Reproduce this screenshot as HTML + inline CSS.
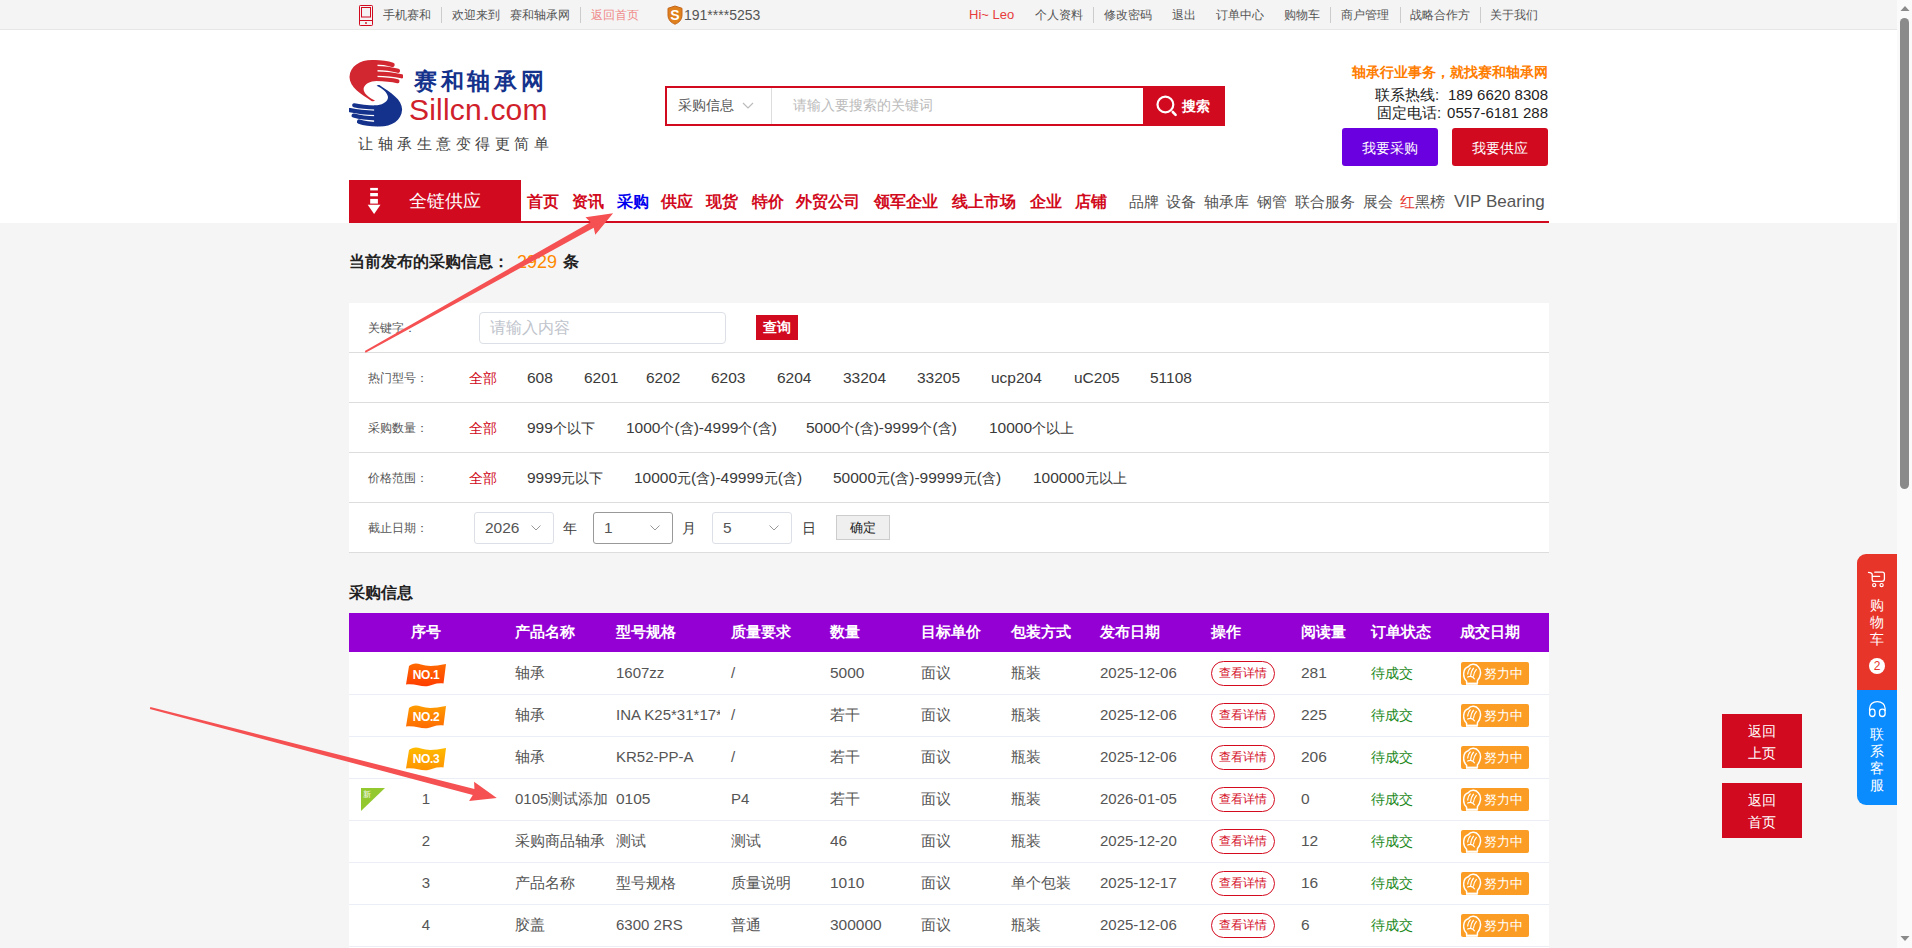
<!DOCTYPE html>
<html><head><meta charset="utf-8">
<style>
*{margin:0;padding:0;box-sizing:border-box}
html,body{width:1912px;height:948px;overflow:hidden;background:#f5f5f5;font-family:"Liberation Sans",sans-serif;color:#333}
.a{position:absolute;white-space:nowrap}
#top{position:absolute;left:0;top:0;width:1897px;height:30px;background:#f4f4f4;border-bottom:1px solid #e6e6e6}
#top .a{font-size:12px;color:#555;top:7px;line-height:16px}
#top .sep{width:1px;height:16px;background:#ccc;top:7px}
#hdr{position:absolute;left:0;top:30px;width:1897px;height:193px;background:#fff}
.nav{font-size:16px;font-weight:bold;color:#d10a20;top:192px;line-height:20px}
.nav2{font-size:15px;color:#555;top:192px;line-height:20px}
</style></head><body>
<div id="top">
  <svg class="a" style="left:358px;top:4px" width="16" height="23" viewBox="0 0 16 23"><rect x="1.5" y="1.5" width="13" height="20" rx="0.8" fill="none" stroke="#d10a20" stroke-width="1"/><rect x="3.5" y="3.5" width="9" height="9.5" fill="none" stroke="#d10a20" stroke-width="1"/><line x1="1.5" y1="16.5" x2="14.5" y2="16.5" stroke="#d10a20" stroke-width="1"/><circle cx="8" cy="19" r="0.9" fill="#d10a20"/></svg>
  <span class="a" style="left:383px">手机赛和</span>
  <span class="a sep" style="left:441px"></span>
  <span class="a" style="left:452px">欢迎来到</span>
  <span class="a" style="left:510px">赛和轴承网</span>
  <span class="a sep" style="left:580px"></span>
  <span class="a" style="left:591px;color:#f08a8a">返回首页</span>
  <svg class="a" style="left:667px;top:5px" width="16" height="20" viewBox="0 0 16 20"><path d="M8 1 L15 3.3 L15 10 C15 14.8 11.8 17.8 8 19.2 C4.2 17.8 1 14.8 1 10 L1 3.3 Z" fill="#e0801c" stroke="#c4661a" stroke-width="1"/><text x="8" y="15.2" font-size="14" font-weight="bold" fill="#fff" text-anchor="middle" font-family="Liberation Sans">S</text></svg>
  <span class="a" style="left:684px;font-size:14px">191****5253</span>
  <span class="a" style="left:969px;color:#e83c3c;font-size:13px">Hi~ Leo</span>
  <span class="a" style="left:1035px">个人资料</span>
  <span class="a sep" style="left:1093px"></span>
  <span class="a" style="left:1104px">修改密码</span>
  <span class="a" style="left:1172px">退出</span>
  <span class="a" style="left:1216px">订单中心</span>
  <span class="a" style="left:1284px">购物车</span>
  <span class="a sep" style="left:1330px"></span>
  <span class="a" style="left:1341px">商户管理</span>
  <span class="a sep" style="left:1400px"></span>
  <span class="a" style="left:1410px">战略合作方</span>
  <span class="a sep" style="left:1480px"></span>
  <span class="a" style="left:1490px">关于我们</span>
</div>
<div id="hdr"></div>
<svg class="a" style="left:349px;top:60px" width="54" height="67" viewBox="0 0 54 67"><path d="M22.5,41 C12,34 0.5,27 0.5,17 C1,6 11,0 23,0 C25,0 27,0.3 28.5,0.6 L28.5,21 C26.5,20.9 25,21.1 23,21.6 C17,23.3 13.8,26.8 14.8,30.5 C16,34.5 20.5,38 26,40.6 C25,41.6 23.5,41.5 22.5,41 Z" fill="#d22630"/><g stroke="#d22630" stroke-linecap="round" fill="none"><path d="M25,2.2 Q36,2.2 43.5,4.8" stroke-width="4.4"/><path d="M27,8 Q40,8.3 49,10.8" stroke-width="4.2"/><path d="M27,13.6 Q42,13.9 52.6,16.3" stroke-width="4.2"/><path d="M27,19 Q40,19.2 48.5,21.2" stroke-width="4"/></g><g transform="rotate(180 26.8 33.2)"><path d="M22.5,41 C12,34 0.5,27 0.5,17 C1,6 11,0 23,0 C25,0 27,0.3 28.5,0.6 L28.5,21 C26.5,20.9 25,21.1 23,21.6 C17,23.3 13.8,26.8 14.8,30.5 C16,34.5 20.5,38 26,40.6 C25,41.6 23.5,41.5 22.5,41 Z" fill="#14328c"/><g stroke="#14328c" stroke-linecap="round" fill="none"><path d="M25,2.2 Q36,2.2 43.5,4.8" stroke-width="4.4"/><path d="M27,8 Q40,8.3 49,10.8" stroke-width="4.2"/><path d="M27,13.6 Q42,13.9 52.6,16.3" stroke-width="4.2"/><path d="M27,19 Q40,19.2 48.5,21.2" stroke-width="4"/></g></g></svg>
<span class="a" style="left:414px;top:66px;font-size:23px;font-weight:900;color:#14328c;letter-spacing:3.7px;line-height:30px">赛和轴承网</span>
<span class="a" style="left:409px;top:93px;font-size:30px;color:#d0202a;letter-spacing:0.2px;line-height:34px">Sillcn.com</span>
<span class="a" style="left:358px;top:134px;font-size:15px;color:#444;letter-spacing:4.5px;line-height:20px">让轴承生意变得更简单</span>

<div class="a" style="left:665px;top:86px;width:479px;height:40px;border:2px solid #d10a20;border-right:none;background:#fff"></div>
<span class="a" style="left:678px;top:96px;font-size:14px;color:#555;line-height:18px">采购信息</span>
<svg class="a" style="left:742px;top:102px" width="12" height="8" viewBox="0 0 12 8"><path d="M1 1 L6 6 L11 1" stroke="#bbb" stroke-width="1.2" fill="none"/></svg>
<div class="a" style="left:771px;top:88px;width:1px;height:36px;background:#ddd"></div>
<span class="a" style="left:793px;top:96px;font-size:14px;color:#bbb;line-height:18px">请输入要搜索的关键词</span>
<div class="a" style="left:1143px;top:86px;width:82px;height:40px;background:#d10a20"></div>
<svg class="a" style="left:1155px;top:95px" width="23" height="23" viewBox="0 0 23 23"><circle cx="10.4" cy="9.5" r="7.9" stroke="#fff" stroke-width="2.2" fill="none"/><path d="M17.8 17 L20.6 19.8" stroke="#fff" stroke-width="2.6" stroke-linecap="round"/></svg>
<span class="a" style="left:1182px;top:97px;font-size:14px;font-weight:bold;color:#fff;line-height:18px">搜索</span>

<span class="a" style="left:1352px;top:63px;font-size:14px;font-weight:bold;color:#ff7d00;line-height:18px">轴承行业事务，就找赛和轴承网</span>
<span class="a" style="left:1375px;top:86px;font-size:15px;color:#222;line-height:18px">联系热线</span><span class="a" style="left:1435px;top:86px;font-size:15px;color:#222;line-height:18px">:</span><span class="a" style="left:1348px;width:200px;text-align:right;top:86px;font-size:15px;color:#222;line-height:18px">189 6620 8308</span>
<span class="a" style="left:1377px;top:104px;font-size:15px;color:#222;line-height:18px">固定电话</span><span class="a" style="left:1437px;top:104px;font-size:15px;color:#222;line-height:18px">:</span><span class="a" style="left:1348px;width:200px;text-align:right;top:104px;font-size:15px;color:#222;line-height:18px">0557-6181 288</span>
<div class="a" style="left:1342px;top:128px;width:96px;height:38px;background:#6a00df;border-radius:3px;color:#fff;font-size:14px;font-weight:500;text-align:center;line-height:40px">我要采购</div>
<div class="a" style="left:1452px;top:128px;width:96px;height:38px;background:#d10a20;border-radius:3px;color:#fff;font-size:14px;font-weight:500;text-align:center;line-height:40px">我要供应</div>

<div class="a" style="left:349px;top:180px;width:172px;height:43px;background:#d10a20"></div>
<svg class="a" style="left:367px;top:187px" width="14" height="28" viewBox="0 0 14 28"><rect x="3.2" y="0.9" width="7.7" height="2.5" fill="#fff"/><rect x="3.2" y="6" width="7.7" height="3.3" fill="#fff"/><rect x="3.2" y="11.9" width="7.7" height="4.7" fill="#fff"/><path d="M0.7 17.7 L13.5 17.7 L7.1 26.9 Z" fill="#fff"/></svg>
<span class="a" style="left:409px;top:190px;font-size:18px;font-weight:500;color:#fff;line-height:22px">全链供应</span>
<div class="a" style="left:520px;top:221px;width:1029px;height:2px;background:#d10a20"></div>
<span class="a nav" style="left:527px">首页</span>
<span class="a nav" style="left:572px">资讯</span>
<span class="a nav" style="left:617px;color:#0000ee">采购</span>
<span class="a nav" style="left:661px">供应</span>
<span class="a nav" style="left:706px">现货</span>
<span class="a nav" style="left:752px">特价</span>
<span class="a nav" style="left:796px">外贸公司</span>
<span class="a nav" style="left:874px">领军企业</span>
<span class="a nav" style="left:952px">线上市场</span>
<span class="a nav" style="left:1030px">企业</span>
<span class="a nav" style="left:1075px">店铺</span>
<span class="a nav2" style="left:1129px">品牌</span>
<span class="a nav2" style="left:1166px">设备</span>
<span class="a nav2" style="left:1204px">轴承库</span>
<span class="a nav2" style="left:1257px">钢管</span>
<span class="a nav2" style="left:1295px">联合服务</span>
<span class="a nav2" style="left:1363px">展会</span>
<span class="a nav2" style="left:1400px"><span style="color:#e8342c">红</span>黑榜</span>
<span class="a nav2" style="left:1454px;font-size:17px">VIP</span>
<span class="a nav2" style="left:1486px;font-size:17px">Bearing</span>
<span class="a" style="left:349px;top:252px;font-size:16px;font-weight:bold;color:#222;line-height:20px">当前发布的采购信息：</span>
<span class="a" style="left:517px;top:251px;font-size:18px;color:#ff8a00;line-height:22px">2929</span>
<span class="a" style="left:563px;top:252px;font-size:16px;font-weight:bold;color:#222;line-height:20px">条</span>
<div class="a" style="left:349px;top:303px;width:1200px;height:250px;background:#fff"></div>
<div class="a" style="left:349px;top:352px;width:1200px;height:1px;background:#ddd"></div>
<div class="a" style="left:349px;top:402px;width:1200px;height:1px;background:#ddd"></div>
<div class="a" style="left:349px;top:452px;width:1200px;height:1px;background:#ddd"></div>
<div class="a" style="left:349px;top:502px;width:1200px;height:1px;background:#ddd"></div>
<div class="a" style="left:349px;top:552px;width:1200px;height:1px;background:#ddd"></div>
<style>.lb{font-size:12px;color:#555;line-height:16px}.it{font-size:14px;color:#3a3a3a;line-height:18px}.rd{color:#d10a20}</style>
<span class="a lb" style="left:368px;top:320px">关键字：</span>
<div class="a" style="left:479px;top:312px;width:247px;height:32px;border:1px solid #dcdfe6;border-radius:4px;background:#fff"></div>
<span class="a" style="left:490px;top:318px;font-size:16px;color:#c0c4cc;line-height:20px">请输入内容</span>
<div class="a" style="left:756px;top:315px;width:42px;height:25px;background:#d10a20;color:#fff;font-size:14px;font-weight:bold;text-align:center;line-height:25px">查询</div>

<span class="a lb" style="left:368px;top:370px">热门型号：</span>
<span class="a it rd" style="left:469px;top:369px">全部</span>
<span class="a it" style="left:527px;top:369px"><span style="font-size:15.5px">608</span></span>
<span class="a it" style="left:584px;top:369px"><span style="font-size:15.5px">6201</span></span>
<span class="a it" style="left:646px;top:369px"><span style="font-size:15.5px">6202</span></span>
<span class="a it" style="left:711px;top:369px"><span style="font-size:15.5px">6203</span></span>
<span class="a it" style="left:777px;top:369px"><span style="font-size:15.5px">6204</span></span>
<span class="a it" style="left:843px;top:369px"><span style="font-size:15.5px">33204</span></span>
<span class="a it" style="left:917px;top:369px"><span style="font-size:15.5px">33205</span></span>
<span class="a it" style="left:991px;top:369px"><span style="font-size:15.5px">ucp204</span></span>
<span class="a it" style="left:1074px;top:369px"><span style="font-size:15.5px">uC205</span></span>
<span class="a it" style="left:1150px;top:369px"><span style="font-size:15.5px">51108</span></span>

<span class="a lb" style="left:368px;top:420px">采购数量：</span>
<span class="a it rd" style="left:469px;top:419px">全部</span>
<span class="a it" style="left:527px;top:419px"><span style="font-size:15.5px">999</span>个以下</span>
<span class="a it" style="left:626px;top:419px"><span style="font-size:15.5px">1000</span>个<span style="font-size:15.5px">(</span>含<span style="font-size:15.5px">)-4999</span>个<span style="font-size:15.5px">(</span>含<span style="font-size:15.5px">)</span></span>
<span class="a it" style="left:806px;top:419px"><span style="font-size:15.5px">5000</span>个<span style="font-size:15.5px">(</span>含<span style="font-size:15.5px">)-9999</span>个<span style="font-size:15.5px">(</span>含<span style="font-size:15.5px">)</span></span>
<span class="a it" style="left:989px;top:419px"><span style="font-size:15.5px">10000</span>个以上</span>

<span class="a lb" style="left:368px;top:470px">价格范围：</span>
<span class="a it rd" style="left:469px;top:469px">全部</span>
<span class="a it" style="left:527px;top:469px"><span style="font-size:15.5px">9999</span>元以下</span>
<span class="a it" style="left:634px;top:469px"><span style="font-size:15.5px">10000</span>元<span style="font-size:15.5px">(</span>含<span style="font-size:15.5px">)-49999</span>元<span style="font-size:15.5px">(</span>含<span style="font-size:15.5px">)</span></span>
<span class="a it" style="left:833px;top:469px"><span style="font-size:15.5px">50000</span>元<span style="font-size:15.5px">(</span>含<span style="font-size:15.5px">)-99999</span>元<span style="font-size:15.5px">(</span>含<span style="font-size:15.5px">)</span></span>
<span class="a it" style="left:1033px;top:469px"><span style="font-size:15.5px">100000</span>元以上</span>

<span class="a lb" style="left:368px;top:520px">截止日期：</span>
<div class="a" style="left:474px;top:512px;width:80px;height:32px;border:1px solid #dcdfe6;border-radius:3px;background:#fff"></div>
<span class="a it" style="left:485px;top:519px;color:#555"><span style="font-size:15.5px">2026</span></span>
<svg class="a" style="left:531px;top:525px" width="10" height="6" viewBox="0 0 10 6"><path d="M0.5 0.5 L5 5 L9.5 0.5" stroke="#999" stroke-width="1" fill="none"/></svg>
<span class="a it" style="left:563px;top:519px">年</span>
<div class="a" style="left:593px;top:512px;width:80px;height:32px;border:1px solid #999;border-radius:3px;background:#fff"></div>
<span class="a it" style="left:604px;top:519px;color:#555"><span style="font-size:15.5px">1</span></span>
<svg class="a" style="left:650px;top:525px" width="10" height="6" viewBox="0 0 10 6"><path d="M0.5 0.5 L5 5 L9.5 0.5" stroke="#999" stroke-width="1" fill="none"/></svg>
<span class="a it" style="left:682px;top:519px">月</span>
<div class="a" style="left:712px;top:512px;width:80px;height:32px;border:1px solid #dcdfe6;border-radius:3px;background:#fff"></div>
<span class="a it" style="left:723px;top:519px;color:#555"><span style="font-size:15.5px">5</span></span>
<svg class="a" style="left:769px;top:525px" width="10" height="6" viewBox="0 0 10 6"><path d="M0.5 0.5 L5 5 L9.5 0.5" stroke="#999" stroke-width="1" fill="none"/></svg>
<span class="a it" style="left:802px;top:519px">日</span>
<div class="a" style="left:836px;top:515px;width:54px;height:25px;border:1px solid #ccc;background:#efefef;color:#222;font-size:13px;text-align:center;line-height:23px">确定</div>

<span class="a" style="left:349px;top:583px;font-size:16px;font-weight:bold;color:#222;line-height:20px">采购信息</span>
<!--TABLE-->
<style>.th{font-size:15px;font-weight:bold;color:#fff;top:622px;line-height:20px}.td{font-size:14.5px;color:#555;line-height:20px}.td i{font-style:normal;font-size:15px}.td i.d{font-size:15.5px}</style>
<div class="a" style="left:349px;top:613px;width:1200px;height:39px;background:#9400d3"></div>
<div class="a" style="left:349px;top:652px;width:1200px;height:296px;background:#fff"></div>
<span class="a th" style="left:411px">序号</span>
<span class="a th" style="left:515px">产品名称</span>
<span class="a th" style="left:616px">型号规格</span>
<span class="a th" style="left:731px">质量要求</span>
<span class="a th" style="left:830px">数量</span>
<span class="a th" style="left:921px">目标单价</span>
<span class="a th" style="left:1011px">包装方式</span>
<span class="a th" style="left:1100px">发布日期</span>
<span class="a th" style="left:1211px">操作</span>
<span class="a th" style="left:1301px">阅读量</span>
<span class="a th" style="left:1371px">订单状态</span>
<span class="a th" style="left:1460px">成交日期</span>
<div class="a" style="left:349px;top:694px;width:1200px;height:1px;background:#eceef5"></div>
<svg class="a" style="left:406px;top:663px" width="41" height="24" viewBox="0 0 41 24"><defs><linearGradient id="g1" x1="0" y1="0" x2="0" y2="1"><stop offset="0" stop-color="#ff6a00"/><stop offset="1" stop-color="#ff3d00"/></linearGradient></defs><path d="M3,3 C6,0.5 10,-0.3 15,1.5 C21,3.5 28,3.5 40,1 L37.5,20.5 C30,19.5 26,22.5 21,23.2 C15,24 8,20 0,21.5 Z" fill="url(#g1)"/><text x="20" y="15.5" font-size="12" font-weight="bold" fill="#fff" text-anchor="middle" letter-spacing="-0.35" font-family="Liberation Sans">NO.1</text></svg>
<span class="a td" style="left:515px;top:663px;">轴承</span>
<span class="a td" style="left:616px;top:663px;width:104px;overflow:hidden;"><i>1607zz</i></span>
<span class="a td" style="left:731px;top:663px;"><i>/</i></span>
<span class="a td" style="left:830px;top:663px;"><i class="d">5000</i></span>
<span class="a td" style="left:921px;top:663px;">面议</span>
<span class="a td" style="left:1011px;top:663px;">瓶装</span>
<span class="a td" style="left:1100px;top:663px;"><i>2025-12-06</i></span>
<div class="a" style="left:1211px;top:661px;width:64px;height:25px;border:1px solid #d40b1f;border-radius:13px;color:#d40b1f;font-size:12px;text-align:center;line-height:23px">查看详情</div>
<span class="a td" style="left:1301px;top:663px"><i class="d">281</i></span>
<span class="a td" style="left:1371px;top:663px;color:#1e8a1e;font-size:14px">待成交</span>
<div class="a" style="left:1461px;top:662px;width:68px;height:23px;background:#fb9d24;border-radius:2px"></div>
<svg class="a" style="left:1463px;top:663px" width="19" height="23" viewBox="0 0 19 23"><path d="M3.6,20.5 L3.6,18.3 C1.3,16 0.4,13.5 0.7,10.5 C1,6.8 2.8,4.5 5.2,3.8 C6.7,1.8 8.6,1.1 10.6,1.3 C12.8,1.5 14.3,2.3 15.3,3.8 C17.2,5.8 17.8,8.5 17.4,11.2 C17,14 15.8,16.3 14.4,17.8 L14.4,20.5" stroke="#fff" stroke-width="1.5" fill="none"/><rect x="3" y="19.6" width="11.8" height="2.2" fill="#fff"/><path d="M4.6,11.5 C5,8.5 6,6 7.6,4.6 M7.6,13 C8,9.5 9.2,6.5 10.8,4.8 M10.4,13.5 C10.8,10.5 12,8 13.6,6.2 M4.2,14.2 C7,12.8 10,13.2 11.8,16.2" stroke="#fff" stroke-width="1.2" fill="none"/></svg>
<span class="a" style="left:1484px;top:665px;font-size:13px;font-weight:500;color:#fff;line-height:18px">努力中</span>
<div class="a" style="left:349px;top:736px;width:1200px;height:1px;background:#eceef5"></div>
<svg class="a" style="left:406px;top:705px" width="41" height="24" viewBox="0 0 41 24"><defs><linearGradient id="g2" x1="0" y1="0" x2="0" y2="1"><stop offset="0" stop-color="#ff9c00"/><stop offset="1" stop-color="#ff6a00"/></linearGradient></defs><path d="M3,3 C6,0.5 10,-0.3 15,1.5 C21,3.5 28,3.5 40,1 L37.5,20.5 C30,19.5 26,22.5 21,23.2 C15,24 8,20 0,21.5 Z" fill="url(#g2)"/><text x="20" y="15.5" font-size="12" font-weight="bold" fill="#fff" text-anchor="middle" letter-spacing="-0.35" font-family="Liberation Sans">NO.2</text></svg>
<span class="a td" style="left:515px;top:705px;">轴承</span>
<span class="a td" style="left:616px;top:705px;width:104px;overflow:hidden;"><i>INA K25*31*17*5</i></span>
<span class="a td" style="left:731px;top:705px;"><i>/</i></span>
<span class="a td" style="left:830px;top:705px;">若干</span>
<span class="a td" style="left:921px;top:705px;">面议</span>
<span class="a td" style="left:1011px;top:705px;">瓶装</span>
<span class="a td" style="left:1100px;top:705px;"><i>2025-12-06</i></span>
<div class="a" style="left:1211px;top:703px;width:64px;height:25px;border:1px solid #d40b1f;border-radius:13px;color:#d40b1f;font-size:12px;text-align:center;line-height:23px">查看详情</div>
<span class="a td" style="left:1301px;top:705px"><i class="d">225</i></span>
<span class="a td" style="left:1371px;top:705px;color:#1e8a1e;font-size:14px">待成交</span>
<div class="a" style="left:1461px;top:704px;width:68px;height:23px;background:#fb9d24;border-radius:2px"></div>
<svg class="a" style="left:1463px;top:705px" width="19" height="23" viewBox="0 0 19 23"><path d="M3.6,20.5 L3.6,18.3 C1.3,16 0.4,13.5 0.7,10.5 C1,6.8 2.8,4.5 5.2,3.8 C6.7,1.8 8.6,1.1 10.6,1.3 C12.8,1.5 14.3,2.3 15.3,3.8 C17.2,5.8 17.8,8.5 17.4,11.2 C17,14 15.8,16.3 14.4,17.8 L14.4,20.5" stroke="#fff" stroke-width="1.5" fill="none"/><rect x="3" y="19.6" width="11.8" height="2.2" fill="#fff"/><path d="M4.6,11.5 C5,8.5 6,6 7.6,4.6 M7.6,13 C8,9.5 9.2,6.5 10.8,4.8 M10.4,13.5 C10.8,10.5 12,8 13.6,6.2 M4.2,14.2 C7,12.8 10,13.2 11.8,16.2" stroke="#fff" stroke-width="1.2" fill="none"/></svg>
<span class="a" style="left:1484px;top:707px;font-size:13px;font-weight:500;color:#fff;line-height:18px">努力中</span>
<div class="a" style="left:349px;top:778px;width:1200px;height:1px;background:#eceef5"></div>
<svg class="a" style="left:406px;top:747px" width="41" height="24" viewBox="0 0 41 24"><defs><linearGradient id="g3" x1="0" y1="0" x2="0" y2="1"><stop offset="0" stop-color="#ffbb00"/><stop offset="1" stop-color="#ff9200"/></linearGradient></defs><path d="M3,3 C6,0.5 10,-0.3 15,1.5 C21,3.5 28,3.5 40,1 L37.5,20.5 C30,19.5 26,22.5 21,23.2 C15,24 8,20 0,21.5 Z" fill="url(#g3)"/><text x="20" y="15.5" font-size="12" font-weight="bold" fill="#fff" text-anchor="middle" letter-spacing="-0.35" font-family="Liberation Sans">NO.3</text></svg>
<span class="a td" style="left:515px;top:747px;">轴承</span>
<span class="a td" style="left:616px;top:747px;width:104px;overflow:hidden;"><i>KR52-PP-A</i></span>
<span class="a td" style="left:731px;top:747px;"><i>/</i></span>
<span class="a td" style="left:830px;top:747px;">若干</span>
<span class="a td" style="left:921px;top:747px;">面议</span>
<span class="a td" style="left:1011px;top:747px;">瓶装</span>
<span class="a td" style="left:1100px;top:747px;"><i>2025-12-06</i></span>
<div class="a" style="left:1211px;top:745px;width:64px;height:25px;border:1px solid #d40b1f;border-radius:13px;color:#d40b1f;font-size:12px;text-align:center;line-height:23px">查看详情</div>
<span class="a td" style="left:1301px;top:747px"><i class="d">206</i></span>
<span class="a td" style="left:1371px;top:747px;color:#1e8a1e;font-size:14px">待成交</span>
<div class="a" style="left:1461px;top:746px;width:68px;height:23px;background:#fb9d24;border-radius:2px"></div>
<svg class="a" style="left:1463px;top:747px" width="19" height="23" viewBox="0 0 19 23"><path d="M3.6,20.5 L3.6,18.3 C1.3,16 0.4,13.5 0.7,10.5 C1,6.8 2.8,4.5 5.2,3.8 C6.7,1.8 8.6,1.1 10.6,1.3 C12.8,1.5 14.3,2.3 15.3,3.8 C17.2,5.8 17.8,8.5 17.4,11.2 C17,14 15.8,16.3 14.4,17.8 L14.4,20.5" stroke="#fff" stroke-width="1.5" fill="none"/><rect x="3" y="19.6" width="11.8" height="2.2" fill="#fff"/><path d="M4.6,11.5 C5,8.5 6,6 7.6,4.6 M7.6,13 C8,9.5 9.2,6.5 10.8,4.8 M10.4,13.5 C10.8,10.5 12,8 13.6,6.2 M4.2,14.2 C7,12.8 10,13.2 11.8,16.2" stroke="#fff" stroke-width="1.2" fill="none"/></svg>
<span class="a" style="left:1484px;top:749px;font-size:13px;font-weight:500;color:#fff;line-height:18px">努力中</span>
<div class="a" style="left:349px;top:820px;width:1200px;height:1px;background:#eceef5"></div>
<span class="a td" style="left:406px;width:40px;text-align:center;top:789px"><i>1</i></span>
<span class="a td" style="left:515px;top:789px;"><i>0105</i>测试添加</span>
<span class="a td" style="left:616px;top:789px;width:104px;overflow:hidden;"><i class="d">0105</i></span>
<span class="a td" style="left:731px;top:789px;"><i>P4</i></span>
<span class="a td" style="left:830px;top:789px;">若干</span>
<span class="a td" style="left:921px;top:789px;">面议</span>
<span class="a td" style="left:1011px;top:789px;">瓶装</span>
<span class="a td" style="left:1100px;top:789px;"><i>2026-01-05</i></span>
<div class="a" style="left:1211px;top:787px;width:64px;height:25px;border:1px solid #d40b1f;border-radius:13px;color:#d40b1f;font-size:12px;text-align:center;line-height:23px">查看详情</div>
<span class="a td" style="left:1301px;top:789px"><i class="d">0</i></span>
<span class="a td" style="left:1371px;top:789px;color:#1e8a1e;font-size:14px">待成交</span>
<div class="a" style="left:1461px;top:788px;width:68px;height:23px;background:#fb9d24;border-radius:2px"></div>
<svg class="a" style="left:1463px;top:789px" width="19" height="23" viewBox="0 0 19 23"><path d="M3.6,20.5 L3.6,18.3 C1.3,16 0.4,13.5 0.7,10.5 C1,6.8 2.8,4.5 5.2,3.8 C6.7,1.8 8.6,1.1 10.6,1.3 C12.8,1.5 14.3,2.3 15.3,3.8 C17.2,5.8 17.8,8.5 17.4,11.2 C17,14 15.8,16.3 14.4,17.8 L14.4,20.5" stroke="#fff" stroke-width="1.5" fill="none"/><rect x="3" y="19.6" width="11.8" height="2.2" fill="#fff"/><path d="M4.6,11.5 C5,8.5 6,6 7.6,4.6 M7.6,13 C8,9.5 9.2,6.5 10.8,4.8 M10.4,13.5 C10.8,10.5 12,8 13.6,6.2 M4.2,14.2 C7,12.8 10,13.2 11.8,16.2" stroke="#fff" stroke-width="1.2" fill="none"/></svg>
<span class="a" style="left:1484px;top:791px;font-size:13px;font-weight:500;color:#fff;line-height:18px">努力中</span>
<div class="a" style="left:349px;top:862px;width:1200px;height:1px;background:#eceef5"></div>
<span class="a td" style="left:406px;width:40px;text-align:center;top:831px"><i>2</i></span>
<span class="a td" style="left:515px;top:831px;">采购商品轴承</span>
<span class="a td" style="left:616px;top:831px;width:104px;overflow:hidden;">测试</span>
<span class="a td" style="left:731px;top:831px;">测试</span>
<span class="a td" style="left:830px;top:831px;"><i class="d">46</i></span>
<span class="a td" style="left:921px;top:831px;">面议</span>
<span class="a td" style="left:1011px;top:831px;">瓶装</span>
<span class="a td" style="left:1100px;top:831px;"><i>2025-12-20</i></span>
<div class="a" style="left:1211px;top:829px;width:64px;height:25px;border:1px solid #d40b1f;border-radius:13px;color:#d40b1f;font-size:12px;text-align:center;line-height:23px">查看详情</div>
<span class="a td" style="left:1301px;top:831px"><i class="d">12</i></span>
<span class="a td" style="left:1371px;top:831px;color:#1e8a1e;font-size:14px">待成交</span>
<div class="a" style="left:1461px;top:830px;width:68px;height:23px;background:#fb9d24;border-radius:2px"></div>
<svg class="a" style="left:1463px;top:831px" width="19" height="23" viewBox="0 0 19 23"><path d="M3.6,20.5 L3.6,18.3 C1.3,16 0.4,13.5 0.7,10.5 C1,6.8 2.8,4.5 5.2,3.8 C6.7,1.8 8.6,1.1 10.6,1.3 C12.8,1.5 14.3,2.3 15.3,3.8 C17.2,5.8 17.8,8.5 17.4,11.2 C17,14 15.8,16.3 14.4,17.8 L14.4,20.5" stroke="#fff" stroke-width="1.5" fill="none"/><rect x="3" y="19.6" width="11.8" height="2.2" fill="#fff"/><path d="M4.6,11.5 C5,8.5 6,6 7.6,4.6 M7.6,13 C8,9.5 9.2,6.5 10.8,4.8 M10.4,13.5 C10.8,10.5 12,8 13.6,6.2 M4.2,14.2 C7,12.8 10,13.2 11.8,16.2" stroke="#fff" stroke-width="1.2" fill="none"/></svg>
<span class="a" style="left:1484px;top:833px;font-size:13px;font-weight:500;color:#fff;line-height:18px">努力中</span>
<div class="a" style="left:349px;top:904px;width:1200px;height:1px;background:#eceef5"></div>
<span class="a td" style="left:406px;width:40px;text-align:center;top:873px"><i>3</i></span>
<span class="a td" style="left:515px;top:873px;">产品名称</span>
<span class="a td" style="left:616px;top:873px;width:104px;overflow:hidden;">型号规格</span>
<span class="a td" style="left:731px;top:873px;">质量说明</span>
<span class="a td" style="left:830px;top:873px;"><i class="d">1010</i></span>
<span class="a td" style="left:921px;top:873px;">面议</span>
<span class="a td" style="left:1011px;top:873px;">单个包装</span>
<span class="a td" style="left:1100px;top:873px;"><i>2025-12-17</i></span>
<div class="a" style="left:1211px;top:871px;width:64px;height:25px;border:1px solid #d40b1f;border-radius:13px;color:#d40b1f;font-size:12px;text-align:center;line-height:23px">查看详情</div>
<span class="a td" style="left:1301px;top:873px"><i class="d">16</i></span>
<span class="a td" style="left:1371px;top:873px;color:#1e8a1e;font-size:14px">待成交</span>
<div class="a" style="left:1461px;top:872px;width:68px;height:23px;background:#fb9d24;border-radius:2px"></div>
<svg class="a" style="left:1463px;top:873px" width="19" height="23" viewBox="0 0 19 23"><path d="M3.6,20.5 L3.6,18.3 C1.3,16 0.4,13.5 0.7,10.5 C1,6.8 2.8,4.5 5.2,3.8 C6.7,1.8 8.6,1.1 10.6,1.3 C12.8,1.5 14.3,2.3 15.3,3.8 C17.2,5.8 17.8,8.5 17.4,11.2 C17,14 15.8,16.3 14.4,17.8 L14.4,20.5" stroke="#fff" stroke-width="1.5" fill="none"/><rect x="3" y="19.6" width="11.8" height="2.2" fill="#fff"/><path d="M4.6,11.5 C5,8.5 6,6 7.6,4.6 M7.6,13 C8,9.5 9.2,6.5 10.8,4.8 M10.4,13.5 C10.8,10.5 12,8 13.6,6.2 M4.2,14.2 C7,12.8 10,13.2 11.8,16.2" stroke="#fff" stroke-width="1.2" fill="none"/></svg>
<span class="a" style="left:1484px;top:875px;font-size:13px;font-weight:500;color:#fff;line-height:18px">努力中</span>
<div class="a" style="left:349px;top:946px;width:1200px;height:1px;background:#eceef5"></div>
<span class="a td" style="left:406px;width:40px;text-align:center;top:915px"><i>4</i></span>
<span class="a td" style="left:515px;top:915px;">胶盖</span>
<span class="a td" style="left:616px;top:915px;width:104px;overflow:hidden;"><i>6300 2RS</i></span>
<span class="a td" style="left:731px;top:915px;">普通</span>
<span class="a td" style="left:830px;top:915px;"><i class="d">300000</i></span>
<span class="a td" style="left:921px;top:915px;">面议</span>
<span class="a td" style="left:1011px;top:915px;">瓶装</span>
<span class="a td" style="left:1100px;top:915px;"><i>2025-12-06</i></span>
<div class="a" style="left:1211px;top:913px;width:64px;height:25px;border:1px solid #d40b1f;border-radius:13px;color:#d40b1f;font-size:12px;text-align:center;line-height:23px">查看详情</div>
<span class="a td" style="left:1301px;top:915px"><i class="d">6</i></span>
<span class="a td" style="left:1371px;top:915px;color:#1e8a1e;font-size:14px">待成交</span>
<div class="a" style="left:1461px;top:914px;width:68px;height:23px;background:#fb9d24;border-radius:2px"></div>
<svg class="a" style="left:1463px;top:915px" width="19" height="23" viewBox="0 0 19 23"><path d="M3.6,20.5 L3.6,18.3 C1.3,16 0.4,13.5 0.7,10.5 C1,6.8 2.8,4.5 5.2,3.8 C6.7,1.8 8.6,1.1 10.6,1.3 C12.8,1.5 14.3,2.3 15.3,3.8 C17.2,5.8 17.8,8.5 17.4,11.2 C17,14 15.8,16.3 14.4,17.8 L14.4,20.5" stroke="#fff" stroke-width="1.5" fill="none"/><rect x="3" y="19.6" width="11.8" height="2.2" fill="#fff"/><path d="M4.6,11.5 C5,8.5 6,6 7.6,4.6 M7.6,13 C8,9.5 9.2,6.5 10.8,4.8 M10.4,13.5 C10.8,10.5 12,8 13.6,6.2 M4.2,14.2 C7,12.8 10,13.2 11.8,16.2" stroke="#fff" stroke-width="1.2" fill="none"/></svg>
<span class="a" style="left:1484px;top:917px;font-size:13px;font-weight:500;color:#fff;line-height:18px">努力中</span>
<svg class="a" style="left:361px;top:788px" width="24" height="23" viewBox="0 0 24 23"><path d="M0,0 L24,0 L0,23 Z" fill="#94c82f"/><text x="1.5" y="9" font-size="8" fill="#fff" font-family="Liberation Sans">新</text></svg>
<!--/TABLE-->
<!--SIDE-->
<div class="a" style="left:1857px;top:554px;width:40px;height:136px;background:#e8352a;border-radius:9px 0 0 0"></div>
<div class="a" style="left:1857px;top:690px;width:40px;height:115px;background:#0a8cff;border-radius:0 0 0 9px"></div>
<svg class="a" style="left:1866px;top:570px" width="21" height="19" viewBox="0 0 21 19"><path d="M2.5,2.4 C4.5,2.4 6,3 6.2,4.5 L6.2,9.5 C6.2,10.8 7,11.4 8,11.4 L16,11.4 C17.5,11.4 18.4,10.5 18.4,9 L18.4,4 C18.4,2.8 17.8,2.2 16.5,2.2 L8.8,2.2 M7,6.4 L13.6,6.4" stroke="#fff" stroke-width="1.3" fill="none" stroke-linecap="round"/><circle cx="8.2" cy="15.1" r="1.6" stroke="#fff" stroke-width="1.2" fill="none"/><circle cx="15.6" cy="15.1" r="1.6" stroke="#fff" stroke-width="1.2" fill="none"/></svg>
<span class="a" style="left:1870px;top:597px;font-size:14px;font-weight:500;color:#fff;line-height:17px">购</span>
<span class="a" style="left:1870px;top:614px;font-size:14px;font-weight:500;color:#fff;line-height:17px">物</span>
<span class="a" style="left:1870px;top:631px;font-size:14px;font-weight:500;color:#fff;line-height:17px">车</span>
<div class="a" style="left:1869px;top:658px;width:16px;height:16px;border-radius:8px;background:#fff;color:#e8352a;font-size:12px;text-align:center;line-height:16px">2</div>
<svg class="a" style="left:1866px;top:699px" width="22" height="20" viewBox="0 0 22 20"><path d="M3.6,12 L3.6,9.5 C3.6,5.5 6.8,2.6 11.3,2.6 C15.8,2.6 19.1,5.5 19.1,9.5 L19.1,12" stroke="#fff" stroke-width="1.3" fill="none"/><rect x="3.6" y="10.2" width="5.4" height="7.3" rx="2.7" stroke="#fff" stroke-width="1.3" fill="none"/><rect x="13.5" y="10.2" width="5.6" height="7.3" rx="2.8" stroke="#fff" stroke-width="1.3" fill="none"/></svg>
<span class="a" style="left:1870px;top:726px;font-size:14px;font-weight:500;color:#fff;line-height:17px">联</span>
<span class="a" style="left:1870px;top:743px;font-size:14px;font-weight:500;color:#fff;line-height:17px">系</span>
<span class="a" style="left:1870px;top:760px;font-size:14px;font-weight:500;color:#fff;line-height:17px">客</span>
<span class="a" style="left:1870px;top:777px;font-size:14px;font-weight:500;color:#fff;line-height:17px">服</span>
<div class="a" style="left:1722px;top:714px;width:80px;height:54px;background:#d10a20;color:#fff;font-size:14px;font-weight:500;text-align:center;line-height:22px;padding-top:6px;white-space:normal">返回<br>上页</div>
<div class="a" style="left:1722px;top:783px;width:80px;height:55px;background:#d10a20;color:#fff;font-size:14px;font-weight:500;text-align:center;line-height:22px;padding-top:6px;white-space:normal">返回<br>首页</div>
<div class="a" style="left:1897px;top:0;width:15px;height:948px;background:#fafafa"></div>
<div class="a" style="left:1900px;top:18px;width:9px;height:471px;background:#8a8a8a;border-radius:5px"></div>
<svg class="a" style="left:1900px;top:5px" width="10" height="7"><path d="M0.5,6 L5,1 L9.5,6 Z" fill="#8a8a8a"/></svg>
<svg class="a" style="left:1900px;top:935px" width="10" height="7"><path d="M0.5,1 L5,6 L9.5,1 Z" fill="#8a8a8a"/></svg>
<svg class="a" style="left:0;top:0;pointer-events:none" width="1912" height="948">
<polygon points="364.8,351.1 590.6,222.2 585.5,217.3 613.1,213.3 595.3,234.7 593.7,227.8 365.6,352.7" fill="#f55052"/>
<polygon points="150.3,707.1 474.4,788.9 474.1,781.8 496.8,798.0 469.1,801.1 472.8,795.1 149.9,708.9" fill="#f55052"/>
</svg>
<!--/SIDE-->
</body></html>
